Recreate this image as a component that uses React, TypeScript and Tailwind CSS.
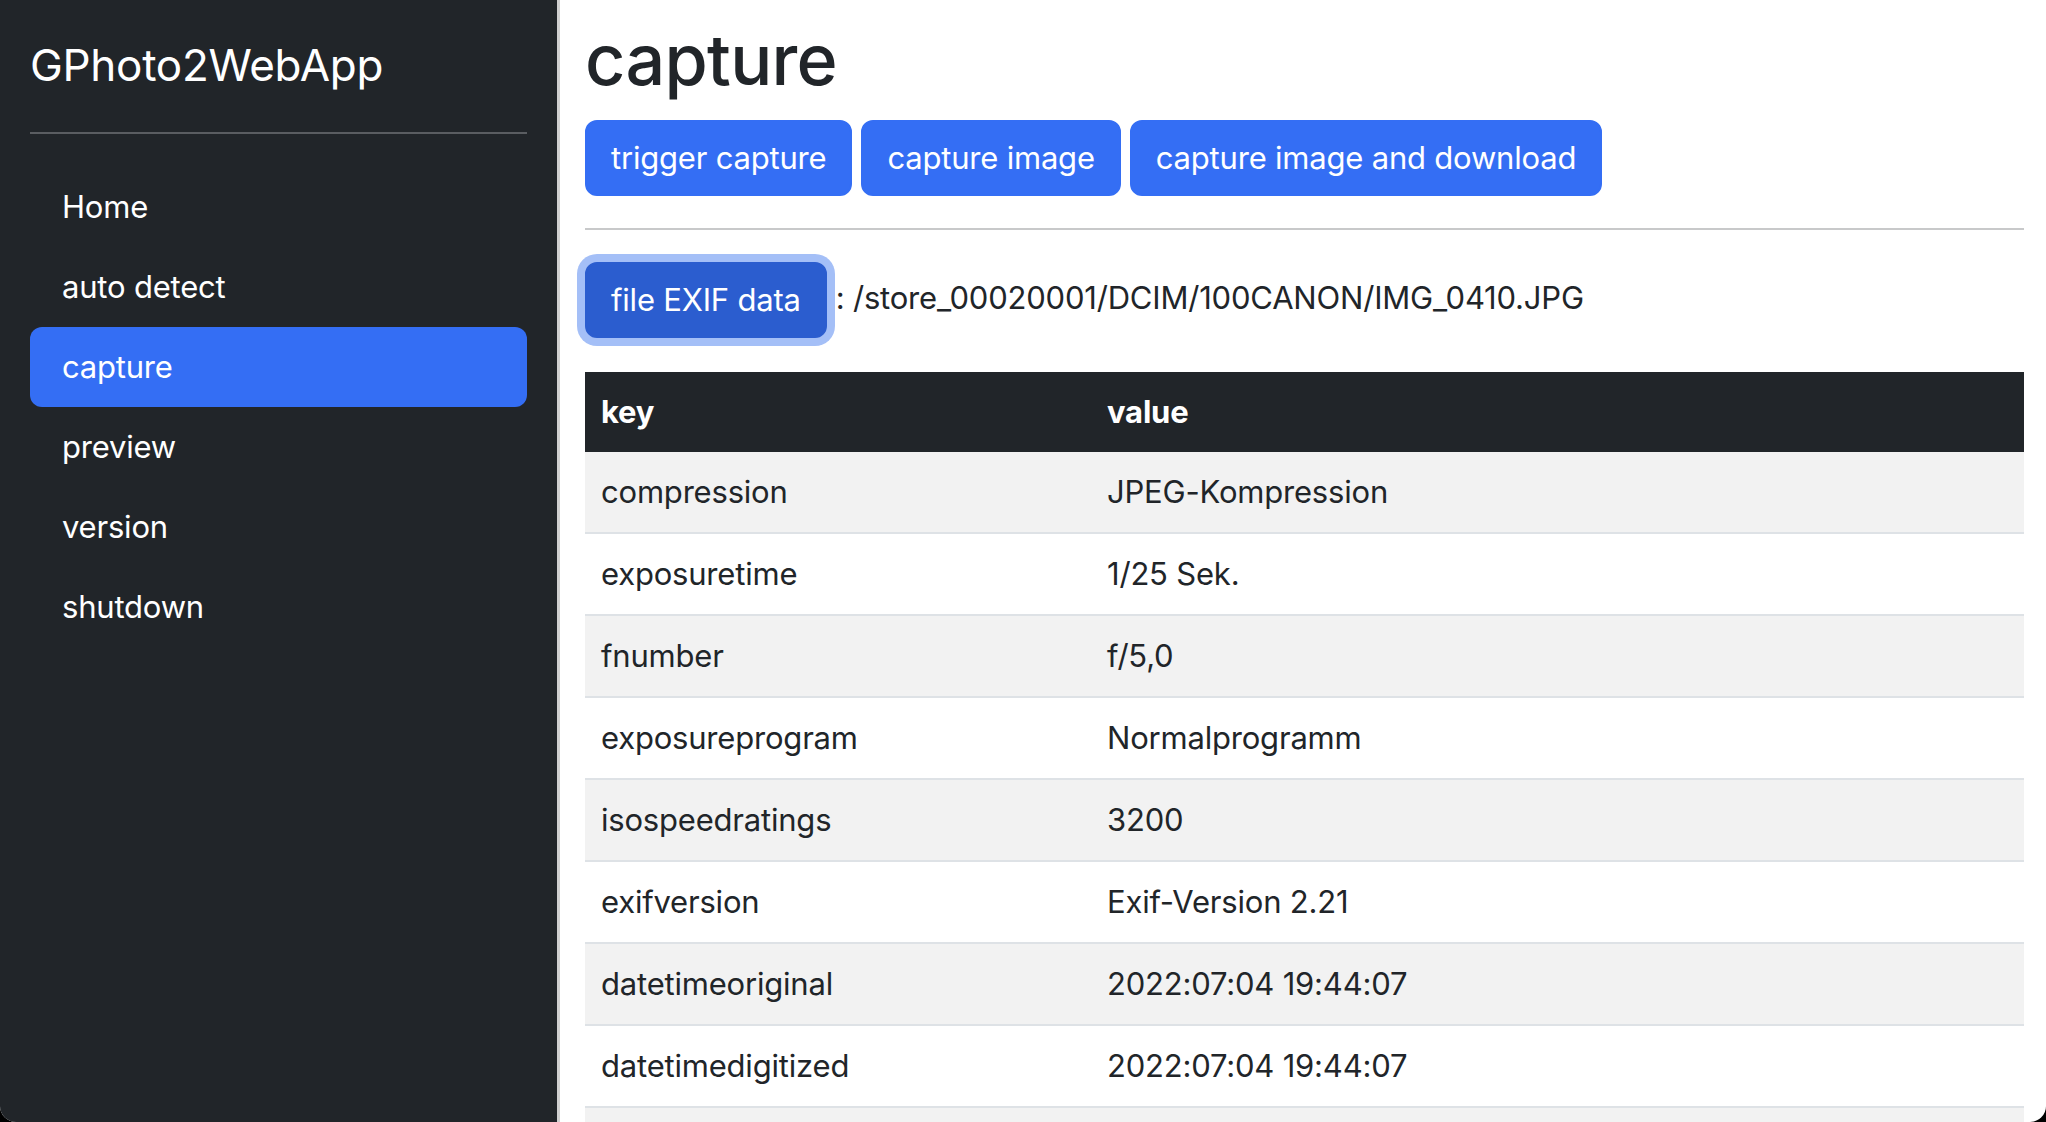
const navItems = ["Home", "auto detect", "capture", "preview", "version", "shutdown"];

const exifRows: [string, string][] = [
  ["compression", "JPEG-Kompression"],
  ["exposuretime", "1/25 Sek."],
  ["fnumber", "f/5,0"],
  ["exposureprogram", "Normalprogramm"],
  ["isospeedratings", "3200"],
  ["exifversion", "Exif-Version 2.21"],
  ["datetimeoriginal", "2022:07:04 19:44:07"],
  ["datetimedigitized", "2022:07:04 19:44:07"],
  ["shutterspeedvalue", "4,62 EV (1/24 Sek.)"],
  ["aperturevalue", "4,62 EV (f/5,0)"],
];

function Sidebar() {
  return (
    <aside className="w-[557px] shrink-0 bg-[#212529] px-[30px] pt-[30px] text-white">
      <div className="text-[44px] leading-[70px] tracking-[-0.3px]">GPhoto2WebApp</div>
      <hr className="my-8 border-t-2 border-[#5a5d61]" />
      <ul className="flex flex-col pt-[1px]">
        {navItems.map((item) => (
          <li key={item}>
            <a
              href="#"
              className={
                item === "capture"
                  ? "block rounded-[12px] bg-[#346ef4] px-8 py-4 text-[31px] leading-[48px] tracking-[-0.2px] text-white"
                  : "block rounded-[12px] px-8 py-4 text-[31px] leading-[48px] tracking-[-0.2px] text-white"
              }
            >
              {item}
            </a>
          </li>
        ))}
      </ul>
    </aside>
  );
}

export default function App() {
  return (
    <div className="h-screen overflow-hidden bg-black font-['Inter',sans-serif]">
      <div className="flex h-full overflow-hidden rounded-b-[16px] bg-white">
        <Sidebar />
        <main className="min-w-0 flex-1 border-l-[3px] border-[#d0d0d0] pl-[25px] pr-[22px] pt-[15px] text-[#212529]">
          <h1 className="mb-4 text-[70px] font-medium leading-[89px] tracking-[-0.7px]">capture</h1>
          <div className="flex gap-[9px] text-[31px] leading-[48px] tracking-[-0.2px]">
            <button className="rounded-[12px] border-2 border-[#346ef4] bg-[#346ef4] px-6 py-3 text-white">
              trigger capture
            </button>
            <button className="rounded-[12px] border-2 border-[#346ef4] bg-[#346ef4] px-6 py-3 text-white">
              capture image
            </button>
            <button className="rounded-[12px] border-2 border-[#346ef4] bg-[#346ef4] px-6 py-3 text-white">
              capture image and download
            </button>
          </div>
          <hr className="my-8 border-t-2 border-[#c8c9ca]" />
          <div className="flex items-center text-[31px] leading-[48px] tracking-[-0.2px]">
            <button className="rounded-[12px] border-2 border-[#2b5dcf] bg-[#2b5dcf] px-6 py-3 text-white ring-8 ring-[#a4bff7]">
              file EXIF data
            </button>
            <span className="ml-[9px] -mt-[4px]">: /store_00020001/DCIM/100CANON/IMG_0410.JPG</span>
          </div>
          <table className="mt-[34px] w-full border-collapse text-left text-[31px] leading-[48px] tracking-[-0.2px]">
            <thead>
              <tr className="bg-[#212529] text-white">
                <th className="w-[506px] px-4 py-4 font-bold">key</th>
                <th className="px-4 py-4 font-bold">value</th>
              </tr>
            </thead>
            <tbody>
              {exifRows.map(([key, value], i) => (
                <tr
                  key={key}
                  className={i % 2 === 0 ? "border-b-2 border-[#dee2e6] bg-[#f2f2f2]" : "border-b-2 border-[#dee2e6] bg-white"}
                >
                  <td className="px-4 py-4">{key}</td>
                  <td className="px-4 py-4">{value}</td>
                </tr>
              ))}
            </tbody>
          </table>
        </main>
      </div>
    </div>
  );
}
